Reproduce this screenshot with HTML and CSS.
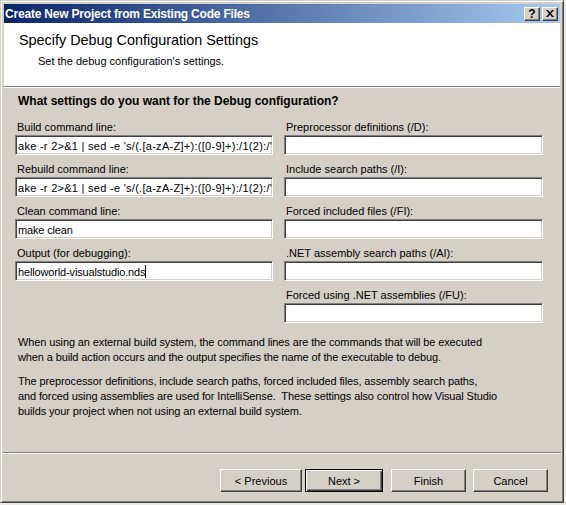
FILE: index.html
```html
<!DOCTYPE html>
<html>
<head>
<meta charset="utf-8">
<link rel="stylesheet" href="styles.css">
</head>
<body>
<div class="window">
  <div class="titlebar">
    <span class="title">Create New Project from Existing Code Files</span>
    <div class="caption-buttons">
      <span class="cap-btn">?</span>
      <span class="cap-btn cap-close">
        <svg width="8" height="7" viewBox="0 0 8 7"><path d="M0 0h2l2 2.5L6 0h2L5 3.5 8 7H6L4 4.5 2 7H0l3-3.5z" fill="#000"/></svg>
      </span>
    </div>
  </div>
  <div class="header">
    <div class="header-title">Specify Debug Configuration Settings</div>
    <div class="header-sub">Set the debug configuration's settings.</div>
  </div>
  <div class="main">
    <div class="question">What settings do you want for the Debug configuration?</div>
    <div class="columns">
      <div class="col">
        <div class="field"><div class="label">Build command line:</div><div class="input input-cmd">ake -r 2&gt;&amp;1 | sed -e 's/(.[a-zA-Z]+):([0-9]+):/1(2):/'</div></div>
        <div class="field"><div class="label">Rebuild command line:</div><div class="input input-cmd">ake -r 2&gt;&amp;1 | sed -e 's/(.[a-zA-Z]+):([0-9]+):/1(2):/'</div></div>
        <div class="field"><div class="label">Clean command line:</div><div class="input">make clean</div></div>
        <div class="field"><div class="label">Output (for debugging):</div><div class="input">helloworld-visualstudio.nds<span class="caret"></span></div></div>
      </div>
      <div class="col">
        <div class="field"><div class="label">Preprocessor definitions (/D):</div><div class="input"></div></div>
        <div class="field"><div class="label">Include search paths (/I):</div><div class="input"></div></div>
        <div class="field"><div class="label">Forced included files (/FI):</div><div class="input"></div></div>
        <div class="field"><div class="label">.NET assembly search paths (/AI):</div><div class="input"></div></div>
        <div class="field"><div class="label">Forced using .NET assemblies (/FU):</div><div class="input"></div></div>
      </div>
    </div>
    <p class="note">When using an external build system, the command lines are the commands that will be executed<br>when a build action occurs and the output specifies the name of the executable to debug.</p>
    <p class="note">The preprocessor definitions, include search paths, forced included files, assembly search paths,<br>and forced using assemblies are used for IntelliSense.&nbsp; These settings also control how Visual Studio<br>builds your project when not using an external build system.</p>
  </div>
  <div class="footer">
    <button class="btn btn-prev">&lt; Previous</button>
    <button class="btn btn-default">Next &gt;</button>
    <button class="btn btn-finish">Finish</button>
    <button class="btn">Cancel</button>
  </div>
</div>
</body>
</html>
```
FILE: styles.css
```css
html, body {
  margin: 0;
  padding: 0;
}
body {
  width: 566px;
  height: 505px;
  background: #ecebe4;
  font-family: "Liberation Sans", Arial, sans-serif;
  font-size: 11px;
  color: #000;
}
.window {
  box-sizing: border-box;
  width: 564px;
  height: 503px;
  background: #d4d0c8;
  border-top: 1px solid #d4d0c8;
  border-left: 1px solid #d4d0c8;
  border-right: 1px solid #404040;
  border-bottom: 1px solid #404040;
  box-shadow: inset 1px 1px 0 #fff, inset -1px -1px 0 #808080;
  padding: 3px;
  display: flex;
  flex-direction: column;
}
.titlebar {
  height: 19px;
  flex: none;
  background: linear-gradient(to right, #0a246a, #a6caf0);
  display: flex;
  align-items: center;
  justify-content: space-between;
  padding: 0 2px 0 1px;
}
.title {
  color: #fff;
  font-weight: bold;
  font-size: 12px;
  letter-spacing: -0.2px;
}
.caption-buttons {
  display: flex;
  gap: 2px;
}
.cap-btn {
  box-sizing: border-box;
  width: 16px;
  height: 14px;
  background: #d4d0c8;
  border-top: 1px solid #fff;
  border-left: 1px solid #fff;
  border-right: 1px solid #404040;
  border-bottom: 1px solid #404040;
  box-shadow: inset -1px -1px 0 #808080;
  display: flex;
  align-items: center;
  justify-content: center;
  font-weight: bold;
  font-size: 12px;
  line-height: 12px;
}
.header {
  flex: none;
  height: 63px;
  background: #fff;
  border-bottom: 1px solid #808080;
  box-shadow: 0 1px 0 #fff;
  padding-left: 15px;
}
.header-title {
  font-size: 14.4px;
  padding-top: 9px;
  line-height: 17px;
}
.header-sub {
  padding-left: 19px;
  padding-top: 5px;
  line-height: 14px;
}
.main {
  flex: 1;
  padding: 7px 0 0 11px;
}
.question {
  font-weight: bold;
  font-size: 12px;
  line-height: 15px;
  padding-left: 3px;
}
.columns {
  display: flex;
  gap: 11px;
  margin-top: 11px;
}
.col {
  width: 258px;
  display: flex;
  flex-direction: column;
  gap: 7px;
}
.col + .col {
  width: 259px;
}
.field {
  display: flex;
  flex-direction: column;
}
.label {
  line-height: 14px;
  padding-left: 2px;
  margin-bottom: 1px;
}
.input {
  box-sizing: border-box;
  height: 20px;
  background: #fff;
  border-top: 1px solid #808080;
  border-left: 1px solid #808080;
  border-right: 1px solid #fff;
  border-bottom: 1px solid #fff;
  box-shadow: inset 1px 1px 0 #404040, inset -1px -1px 0 #d4d0c8;
  padding: 3px 2px 0 2px;
  line-height: 14px;
  white-space: nowrap;
  overflow: hidden;
  letter-spacing: -0.15px;
}
.input-cmd {
  letter-spacing: 0.28px;
}
.caret {
  display: inline-block;
  width: 1px;
  height: 13px;
  background: #000;
  vertical-align: -2px;
}
.note {
  margin: 12px 0 0 3px;
  line-height: 15px;
  white-space: nowrap;
  letter-spacing: -0.12px;
}
.note + .note {
  margin-top: 9px;
}
.footer {
  flex: none;
  height: 47px;
  box-sizing: border-box;
  border-top: 1px solid #808080;
  box-shadow: inset 0 1px 0 #fff;
  margin: 0 -1px 0 -1px;
  display: flex;
  justify-content: flex-end;
  align-items: flex-start;
  padding: 16px 13px 0 0;
}
.btn {
  box-sizing: border-box;
  width: 75px;
  height: 23px;
  background: #d4d0c8;
  font-family: "Liberation Sans", Arial, sans-serif;
  font-size: 11px;
  color: #000;
  border-top: 1px solid #fff;
  border-left: 1px solid #fff;
  border-right: 1px solid #404040;
  border-bottom: 1px solid #404040;
  box-shadow: inset -1px -1px 0 #808080;
  padding: 0;
  margin-left: 7px;
}
.btn-prev {
  width: 82px;
}
.btn-default {
  width: 78px;
  margin-left: 3px;
  border: 1px solid #000;
  box-shadow: inset 1px 1px 0 #fff, inset -1px -1px 0 #404040, inset -2px -2px 0 #808080;
}
.btn-finish {
  margin-left: 8px;
}
```
